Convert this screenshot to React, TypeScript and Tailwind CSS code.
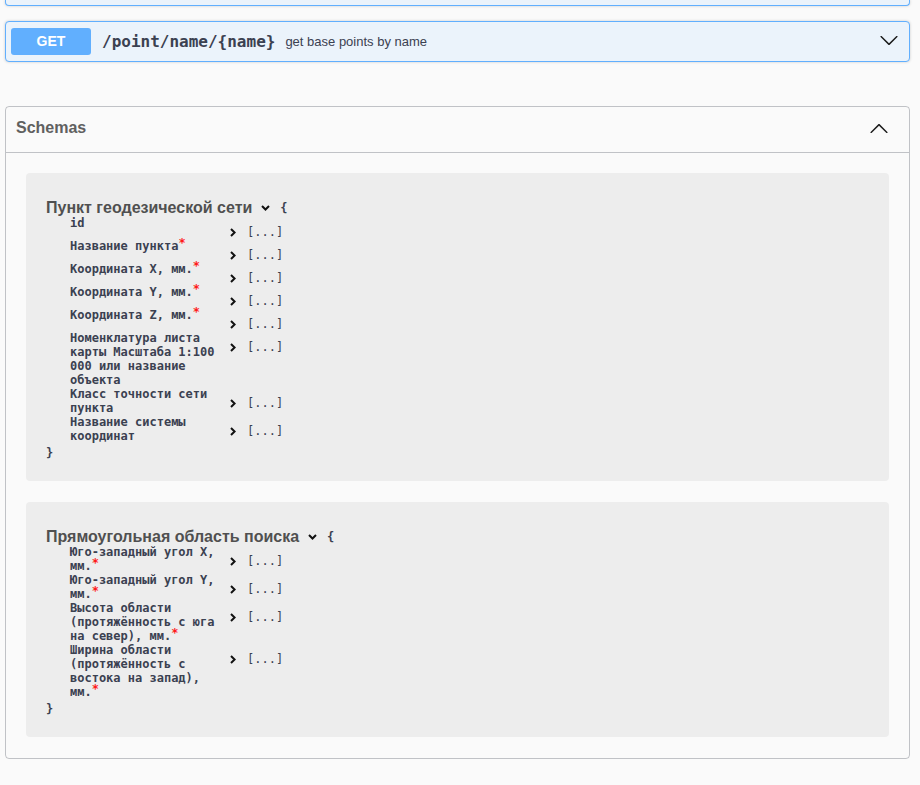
import React from "react";

type Prop = { name: string; required?: boolean };

const box1: Prop[] = [
  { name: "id" },
  { name: "Название пункта", required: true },
  { name: "Координата X, мм.", required: true },
  { name: "Координата Y, мм.", required: true },
  { name: "Координата Z, мм.", required: true },
  { name: "Номенклатура листа карты Масштаба 1:100 000 или название объекта" },
  { name: "Класс точности сети пункта" },
  { name: "Название системы координат" },
];

const box2: Prop[] = [
  { name: "Юго-западный угол X, мм.", required: true },
  { name: "Юго-западный угол Y, мм.", required: true },
  { name: "Высота области (протяжённость с юга на север), мм.", required: true },
  { name: "Ширина области (протяжённость с востока на запад), мм.", required: true },
];

const ArrowDown = ({ className }: { className?: string }) => (
  <svg width="20" height="20" viewBox="0 0 20 20" className={className}>
    <path
      fill="#1b1b1b"
      d="M17.418 6.109c.272-.268.709-.268.979 0s.271.701 0 .969l-7.908 7.83c-.27.268-.707.268-.979 0l-7.908-7.83c-.27-.268-.27-.701 0-.969.271-.268.709-.268.979 0L10 13.25l7.418-7.141z"
    />
  </svg>
);

const ArrowUp = ({ className }: { className?: string }) => (
  <svg width="20" height="20" viewBox="0 0 20 20" className={className}>
    <path
      fill="#1b1b1b"
      d="M17.418 14.908c.272.268.709.268.979 0s.271-.701 0-.969l-7.908-7.83c-.27-.268-.707-.268-.979 0l-7.908 7.83c-.27.268-.27.701 0 .969.271.268.709.268.979 0L10 7.767l7.418 7.141z"
    />
  </svg>
);

const SmallDown = () => (
  <svg width="9" height="6" viewBox="0 0 9 6" className="block">
    <polyline points="1,1 4.5,4.5 8,1" fill="none" stroke="#111" strokeWidth="2" />
  </svg>
);

const SmallRight = () => (
  <svg width="6" height="9" viewBox="0 0 6 9" className="block">
    <polyline points="1,1 4.6,4.5 1,8" fill="none" stroke="#111" strokeWidth="2" />
  </svg>
);

const mono = "font-['DejaVu_Sans_Mono','Liberation_Mono',monospace]";

function ModelBox({ title, props, last }: { title: string; props: Prop[]; last?: boolean }) {
  return (
    <div className={`rounded-[4px] bg-black/5 pl-[20px] pt-[26px] pb-[18px] ${last ? "" : "mb-[21px]"}`}>
      <div className="flex h-[17px] items-center">
        <span className="text-[16px] font-bold text-[#505050]">{title}</span>
        <span className="ml-[9px]">
          <SmallDown />
        </span>
        <span className={`ml-[10px] text-[12px] font-bold leading-[14px] text-[#3b4151] ${mono}`}>{"{"}</span>
      </div>
      <table className={`border-collapse text-[12px] leading-[14px] text-[#3b4151] ${mono}`}>
        <tbody>
          {props.map((p) => (
            <tr key={p.name}>
              <td className="w-[174px] pl-[24px] align-top font-bold">
                {p.name}
                {p.required && <span className="relative -top-[3px] text-[#ff1a1a]">*</span>}
              </td>
              <td className="pt-[9px] align-top">
                <div className="flex h-[14px] items-center pl-[10px]">
                  <SmallRight />
                  <span className="ml-[11px] text-[#3b4151]">[...]</span>
                </div>
              </td>
            </tr>
          ))}
        </tbody>
      </table>
      <div className={`flex h-[20px] items-center text-[12px] font-bold text-[#3b4151] ${mono}`}>{"}"}</div>
    </div>
  );
}

export default function App() {
  return (
    <div className="min-h-[785px] bg-[#fafafa] font-['Liberation_Sans',Arial,sans-serif] text-[#3b4151]">
      <div className="ml-[5px] mr-[10px] pb-[20px]">
        <div className="h-[6px] rounded-b-[4px] border-x border-b border-[#61affe] bg-[#ebf3fb] shadow-[0_0_3px_rgba(0,0,0,0.19)]" />

        <div className="mt-[15px] flex h-[41px] items-center rounded-[4px] border border-[#61affe] bg-[#ebf3fb] px-[5px] shadow-[0_0_3px_rgba(0,0,0,0.19)]">
          <div className="flex h-[27px] w-[80px] items-center justify-center rounded-[3px] bg-[#61affe] text-[14px] font-bold text-white">
            GET
          </div>
          <span className={`ml-[11px] text-[16px] font-bold text-[#3b4151] ${mono}`}>/point/name/{"{name}"}</span>
          <span className="ml-[10px] text-[13px] text-[#3b4151]">get base points by name</span>
          <ArrowDown className="ml-auto mr-[5px] -mt-[4px]" />
        </div>

        <section className="mt-[44px] rounded-[4px] border border-[rgba(59,65,81,0.3)]">
          <div className="flex h-[46px] items-center border-b border-[rgba(59,65,81,0.3)] pb-[4px] pl-[10px] pr-[20px]">
            <span className="flex-1 text-[16px] font-bold text-[#606060]">Schemas</span>
            <ArrowUp />
          </div>
          <div className="px-[20px] pt-[20px] pb-[21px]">
            <ModelBox title="Пункт геодезической сети" props={box1} />
            <ModelBox title="Прямоугольная область поиска" props={box2} last />
          </div>
        </section>
      </div>
    </div>
  );
}
